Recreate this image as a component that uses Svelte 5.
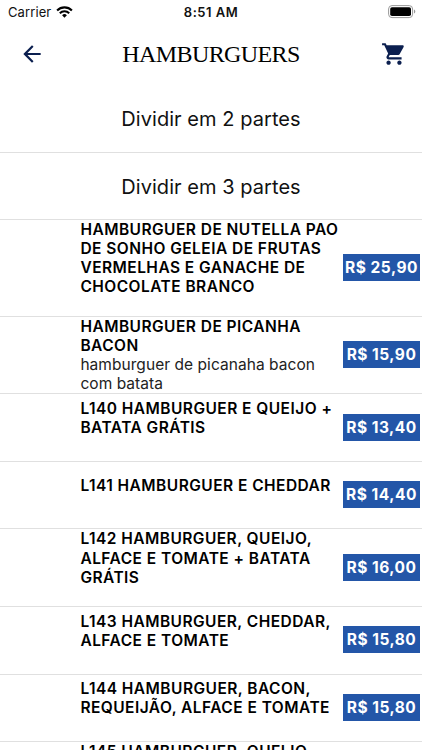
<script lang="ts">
	type Item = { name: string; description?: string; price: string };

	const splits = [2, 3];

	const items: Item[] = [
		{ name: 'HAMBURGUER DE NUTELLA PAO DE SONHO GELEIA DE FRUTAS VERMELHAS E GANACHE DE CHOCOLATE BRANCO', price: '25,90' },
		{ name: 'HAMBURGUER DE PICANHA BACON', description: 'hamburguer de picanaha bacon com batata', price: '15,90' },
		{ name: 'L140 HAMBURGUER E QUEIJO + BATATA GRÁTIS', price: '13,40' },
		{ name: 'L141 HAMBURGUER E CHEDDAR', price: '14,40' },
		{ name: 'L142 HAMBURGUER, QUEIJO, ALFACE E TOMATE + BATATA GRÁTIS', price: '16,00' },
		{ name: 'L143 HAMBURGUER, CHEDDAR, ALFACE E TOMATE', price: '15,80' },
		{ name: 'L144 HAMBURGUER, BACON, REQUEIJÃO, ALFACE E TOMATE', price: '15,80' },
		{ name: 'L145 HAMBURGUER, QUEIJO, BACON, ALFACE E TOMATE + BATATA GRÁTIS', price: '15,80' }
	];
</script>

<div class="screen">
	<div class="status-bar">
		<div class="carrier">
			<span>Carrier</span>
			<svg width="17" height="12" viewBox="0 0 17 12" fill="none" stroke="#000" stroke-width="2.1">
				<path d="M1.1 4.4a10.5 10.5 0 0 1 14.8 0" />
				<path d="M3.8 7.2a6.7 6.7 0 0 1 9.4 0" />
				<path d="M6.1 9.2a3.5 3.5 0 0 1 4.8 0L8.5 11.8z" fill="#000" stroke="none" />
			</svg>
		</div>
		<span class="time">8:51 AM</span>
		<svg class="battery" width="28" height="14" viewBox="0 0 28 14">
			<rect x="0.6" y="0.6" width="24" height="12" rx="3.4" fill="none" stroke="#999" />
			<rect x="2.2" y="2.2" width="20.8" height="8.8" rx="1.8" fill="#000" />
			<path d="M26 4.6c1.8.6 1.8 3.4 0 4z" fill="#999" />
		</svg>
	</div>

	<header>
		<button class="icon-btn" aria-label="Voltar">
			<svg width="26" height="26" viewBox="0 0 24 24" fill="#0b1f4f">
				<path d="M20 11H7.83l5.59-5.59L12 4l-8 8 8 8 1.41-1.41L7.83 13H20v-2z" />
			</svg>
		</button>
		<h1>HAMBURGUERS</h1>
		<button class="icon-btn" aria-label="Carrinho">
			<svg width="26" height="26" viewBox="0 0 24 24" fill="#0b1f4f">
				<path d="M7 18c-1.1 0-1.99.9-1.99 2S5.9 22 7 22s2-.9 2-2-.9-2-2-2zM1 2v2h2l3.6 7.59-1.35 2.45c-.16.28-.25.61-.25.96 0 1.1.9 2 2 2h12v-2H7.42c-.14 0-.25-.11-.25-.25l.03-.12.9-1.63h7.45c.75 0 1.41-.41 1.75-1.03l3.58-6.49c.08-.14.12-.31.12-.48 0-.55-.45-1-1-1H5.21l-.94-2H1zm16 16c-1.1 0-1.99.9-1.99 2s.89 2 1.99 2 2-.9 2-2-.9-2-2-2z" />
			</svg>
		</button>
	</header>

	<main>
		{#each splits as parts}
			<div class="row split">Dividir em {parts} partes</div>
		{/each}

		{#each items as item}
			<div class="row item">
				<div class="info">
					<div class="name">{item.name}</div>
					<div class="description">{item.description ?? ''}</div>
				</div>
				<span class="price">R$ {item.price}</span>
			</div>
		{/each}
	</main>
</div>

<style>
	:global(body) {
		background: #fff;
		overflow: hidden;
	}

	.screen {
		height: 750px;
		overflow: hidden;
		background: #fff;
		color: #111;
		font-family: Inter, 'Liberation Sans', sans-serif;
	}

	.status-bar {
		display: grid;
		grid-template-columns: 1fr auto 1fr;
		align-items: center;
		height: 24px;
		padding: 0 6px;
		font-size: 13px;
	}

	.carrier {
		display: flex;
		align-items: center;
		gap: 5px;
		padding-left: 2px;
		letter-spacing: 0.1px;
	}

	.time {
		font-weight: 600;
		letter-spacing: 0.5px;
	}

	.battery {
		justify-self: end;
	}

	header {
		display: flex;
		align-items: center;
		box-sizing: border-box;
		height: 61px;
		padding: 0 13px 1px 17px;
	}

	.icon-btn {
		display: flex;
		justify-content: center;
		width: 30px;
		padding: 0;
		border: none;
		background: none;
	}

	h1 {
		flex: 1;
		margin: 0;
		padding-right: 4px;
		text-align: center;
		font-family: 'Liberation Serif', serif;
		font-size: 24px;
		font-weight: 400;
		letter-spacing: -0.6px;
		color: #000;
	}

	.row {
		box-sizing: border-box;
		min-height: 67.5px;
		border-bottom: 1px solid #e0e0e0;
		display: flex;
		align-items: center;
	}

	.split {
		justify-content: center;
		padding-top: 2px;
		font-size: 20px;
		letter-spacing: 0.05px;
	}

	.item {
		padding: 0 2px 0 80.4px;
		justify-content: space-between;
	}

	.info {
		width: 261px;
		font-size: 15.5px;
		line-height: 19.15px;
	}

	.name {
		font-weight: 600;
		letter-spacing: 0.46px;
		color: #000;
	}

	.description {
		min-height: 19.15px;
		letter-spacing: 0.05px;
		color: #222;
	}

	.price {
		box-sizing: border-box;
		width: 77px;
		height: 27px;
		margin-bottom: 1px;
		flex-shrink: 0;
		background: #2356a8;
		color: #fff;
		font-size: 15.5px;
		font-weight: 700;
		line-height: 27px;
		letter-spacing: 0.5px;
		text-align: center;
		white-space: nowrap;
	}
</style>
